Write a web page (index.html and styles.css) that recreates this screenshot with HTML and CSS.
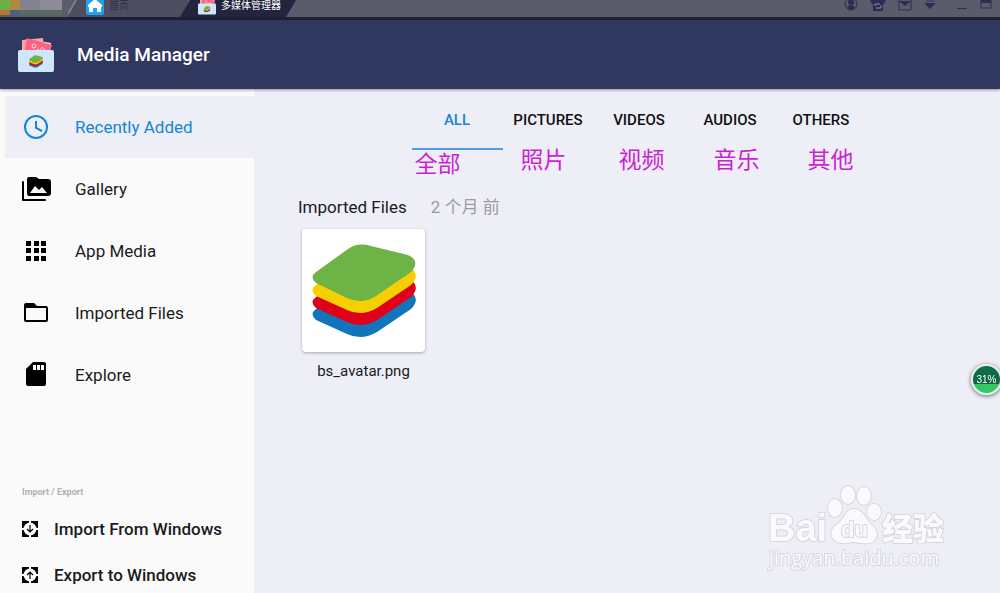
FILE: index.html
```html
<!DOCTYPE html>
<html lang="en">
<head>
    <meta charset="UTF-8">
    <meta name="viewport" content="width=device-width, initial-scale=1.0">
    <title>Media Manager</title>
    <link rel="stylesheet" href="styles.css">
</head>
<body>
    <!-- shared drawings -->
    <svg class="defs" aria-hidden="true">
        <symbol id="stack" viewBox="0 0 104 94">
            <path fill="#1275bb" d="M4 65 L37 41 Q49 32 63 37 L96 46 Q110 54 99 65 L65 88 Q50 97 35 90 L4 76 Q-3 70 4 65Z"/>
            <path fill="#e0001b" d="M4 53 L37 29 Q49 20 63 25 L96 34 Q110 42 99 53 L65 76 Q50 85 35 78 L4 64 Q-3 58 4 53Z"/>
            <path fill="#f6cf00" d="M4 41 L37 17 Q49 8 63 13 L96 22 Q110 30 99 41 L65 64 Q50 73 35 66 L4 52 Q-3 46 4 41Z"/>
            <path fill="#6db346" d="M4 28 L36 5 Q46 -2 59 2 L96 11 Q109 17 99 28 L64 52 Q50 61 35 54 L4 39 Q-3 33 4 28Z"/>
        </symbol>
        <symbol id="media" viewBox="0 0 36 36">
            <path fill="#f4d3e2" d="M4 4 L10 2 L33 6 L31 20 H4Z"/>
            <path fill="#ff9db0" d="M4 3 L25 1 L26 20 H5Z"/>
            <path fill="#f9657f" d="M9 1 L34 8 L30 21 L6 18Z"/>
            <g fill="none" stroke="#ffd5dc">
                <circle cx="16" cy="9" r="2"/>
                <path d="M18 15 L20 12 L22 14 L24 10 L27 13"/>
            </g>
            <path fill="#cfe6fb" d="M2 13 H34 Q36 13 36 15 V33 Q36 35 34 35 H2 Q0 35 0 33 V15 Q0 13 2 13Z"/>
            <use href="#stack" x="11" y="18" width="14" height="13"/>
        </symbol>
    </svg>

    <div class="window-bar">
        <div class="mosaic">
            <span class="m1"></span><span class="m2"></span><span class="m3"></span><span class="m4"></span>
            <span class="m5"></span><span class="m6"></span><span class="m7"></span><span class="m8"></span>
        </div>
        <button class="window-tab home">
            <svg width="18" height="18" viewBox="0 0 18 18">
                <rect width="18" height="18" rx="2" fill="#1ea4ee"/>
                <path fill="#fff" d="M9 2 L16 8 V10 H15 V15 H11 V11 H7 V15 H3 V10 H2 V8Z"/>
            </svg>
            <span>首页</span>
        </button>
        <button class="window-tab active">
            <svg width="18" height="18"><use href="#media"/></svg>
            <span>多媒体管理器</span>
        </button>
        <div class="window-tools">
            <button aria-label="Account">
                <svg width="14" height="14" viewBox="0 0 14 14">
                    <circle cx="7" cy="7" r="6" fill="none" stroke="#2b2e52"/>
                    <circle cx="7" cy="5" r="3" fill="#2b2e52"/>
                    <path fill="#2b2e52" d="M3 11 Q4 8 7 8 T11 11 Q7 14 3 11Z"/>
                </svg>
            </button>
            <button aria-label="Theme">
                <svg width="16" height="14" viewBox="0 0 16 14">
                    <path fill="#2b2e52" d="M0 3 L4 0 H12 L16 3 L14 7 H13 V14 H3 V7 H2Z"/>
                    <path fill="none" stroke="#8d8fa6" d="M5 9 V7 H10 M11 8 V11 H6"/>
                </svg>
            </button>
            <button aria-label="Messages">
                <svg width="14" height="14" viewBox="0 0 14 14">
                    <path fill="none" stroke="#2b2e52" d="M1 1 H13 V13 H1Z"/>
                    <path fill="#2b2e52" d="M1 4 H13 L7 9Z"/>
                </svg>
            </button>
            <button aria-label="Menu">
                <svg width="12" height="12" viewBox="0 0 12 12">
                    <path fill="#44476f" d="M2 2 H10 V5 H2Z"/>
                    <path fill="#2b2e52" d="M0 6 H12 L6 12Z"/>
                </svg>
            </button>
            <button class="minimize" aria-label="Minimize">
                <svg width="12" height="12" viewBox="0 0 12 12"><path fill="#2b2e52" d="M1 11 H11 V12 H1Z"/></svg>
            </button>
            <button aria-label="Maximize">
                <svg width="12" height="12" viewBox="0 0 12 12">
                    <path fill="none" stroke="#2b2e52" d="M1 1 H11 V11 H1Z"/>
                    <path fill="#2b2e52" d="M1 2 H11 V6 H1Z"/>
                </svg>
            </button>
        </div>
    </div>

    <header>
        <svg width="36" height="36"><use href="#media"/></svg>
        <h1>Media Manager</h1>
    </header>

    <div class="layout">
        <aside class="sidebar">
            <nav>
                <a href="#recent" class="nav-item selected">
                    <svg width="32" height="32" viewBox="0 0 32 32">
                        <circle cx="16" cy="16" r="11" fill="none" stroke="#1485d8" stroke-width="2"/>
                        <path fill="none" stroke="#1485d8" stroke-width="2" d="M16 10 V17 L22 20"/>
                    </svg>
                    Recently Added
                </a>
                <a href="#gallery" class="nav-item">
                    <svg width="32" height="32" viewBox="0 0 32 32">
                        <path fill="none" stroke="#000" stroke-width="2" stroke-linejoin="round" stroke-linecap="round" d="M3 9 V27 H25"/>
                        <path d="M9 4 H16 L19 6 H28 Q31 6 31 9 V20 Q31 23 28 23 H9 Q7 23 7 20 V6 Q7 4 9 4Z"/>
                        <path fill="#fafafa" d="M10 20 L15 13 L19 17 L22 14 L27 20Z"/>
                    </svg>
                    Gallery
                </a>
                <a href="#apps" class="nav-item">
                    <svg width="32" height="32" viewBox="0 0 32 32">
                        <path d="M6 6h5v5h-5z M14 6h5v5h-5z M21 6h5v5h-5z M6 13h5v5h-5z M14 13h5v5h-5z M21 13h5v5h-5z M6 21h5v5h-5z M14 21h5v5h-5z M21 21h5v5h-5z"/>
                    </svg>
                    App Media
                </a>
                <a href="#imported" class="nav-item">
                    <svg width="32" height="32" viewBox="0 0 32 32">
                        <path d="M6 6 H14 L17 9 H26 Q28 9 28 11 V23 Q28 25 26 25 H6 Q4 25 4 23 V8 Q4 6 6 6Z"/>
                        <path fill="#fafafa" d="M6 11 H26 V23 H6Z"/>
                    </svg>
                    Imported Files
                </a>
                <a href="#explore" class="nav-item">
                    <svg width="32" height="32" viewBox="0 0 32 32">
                        <path d="M13 3 H24 Q26 3 26 5 V25 Q26 27 24 27 H9 Q6 27 6 25 V10Z"/>
                        <path fill="#fafafa" d="M13 6h3v5h-3z M17 6h3v5h-3z M21 6h3v5h-3z"/>
                    </svg>
                    Explore
                </a>
            </nav>
            <div class="transfer">
                <h2>Import / Export</h2>
                <button>
                    <svg width="16" height="16" viewBox="0 0 16 16">
                        <rect width="16" height="16"/>
                        <circle cx="8" cy="8" r="6.5" fill="#fff"/>
                        <path d="M7 0h2v3h-2z M7 14h2v2h-2z M0 7h2v2h-2z M14 7h2v2h-2z" fill="#fff"/>
                        <path fill="none" stroke="#000" stroke-width="1.2" d="M8 4 V11 M5 8 L8 11 L11 8"/>
                    </svg>
                    Import From Windows
                </button>
                <button>
                    <svg width="16" height="16" viewBox="0 0 16 16">
                        <rect width="16" height="16"/>
                        <circle cx="8" cy="8" r="6.5" fill="#fff"/>
                        <path d="M7 0h2v3h-2z M7 14h2v2h-2z M0 7h2v2h-2z M14 7h2v2h-2z" fill="#fff"/>
                        <path fill="none" stroke="#000" stroke-width="1.2" d="M8 12 V5 M5 8 L8 5 L11 8"/>
                    </svg>
                    Export to Windows
                </button>
            </div>
        </aside>

        <main>
            <div class="tabs">
                <button class="tab current">ALL</button>
                <button class="tab">PICTURES</button>
                <button class="tab">VIDEOS</button>
                <button class="tab">AUDIOS</button>
                <button class="tab">OTHERS</button>
                <!-- translation notes over the tabs -->
                <span class="note note-all">全部</span>
                <span class="note note-pictures">照片</span>
                <span class="note note-videos">视频</span>
                <span class="note note-audios">音乐</span>
                <span class="note note-others">其他</span>
            </div>
            <section>
                <div class="group-title">
                    <h2>Imported Files</h2>
                    <time>2 个月 前</time>
                </div>
                <figure>
                    <div class="thumb">
                        <svg width="104" height="94"><use href="#stack"/></svg>
                    </div>
                    <figcaption>bs_avatar.png</figcaption>
                </figure>
            </section>
        </main>
    </div>

    <div class="badge">31%</div>

    <svg class="watermark" width="184" height="90" viewBox="0 0 184 90">
        <text class="wm-bai" x="3" y="56">Bai</text>
        <g>
            <ellipse cx="70" cy="23" rx="7" ry="9"/>
            <ellipse cx="83" cy="10" rx="7" ry="9"/>
            <ellipse cx="99" cy="11" rx="7" ry="9"/>
            <ellipse cx="109" cy="27" rx="7" ry="8"/>
            <path d="M89 24 Q96 24 100 32 Q104 38 109 42 Q115 50 109 56 Q104 60 89 57 Q74 60 69 55 Q63 48 70 41 Q77 36 80 30 Q83 24 89 24Z"/>
        </g>
        <text class="wm-du" x="76" y="52">du</text>
        <text class="wm-cn" x="117" y="55">经验</text>
        <text class="wm-url" x="4" y="80">jingyan.baidu.com</text>
    </svg>
</body>
</html>
```
FILE: styles.css
```css
* {
    box-sizing: border-box;
}

body {
    margin: 0;
    min-height: 100vh;
    display: flex;
    flex-direction: column;
    font-family: Roboto, "Noto Sans CJK SC", sans-serif;
    color: #1b1b1d;
    background-color: #edeef6;
    overflow-x: hidden;
}

button {
    font-family: inherit;
    background: none;
    border: none;
    margin: 0;
    padding: 0;
    color: inherit;
    cursor: pointer;
}

h1, h2, figure {
    margin: 0;
}

.defs {
    position: absolute;
    width: 0;
    height: 0;
}

/* window bar */
.window-bar {
    display: flex;
    height: 20px;
    background-color: #5b5b6c;
    border-bottom: 3px solid #1f2139;
    overflow: hidden;
}

.mosaic {
    display: grid;
    grid-template-columns: 10px 10px 20px 22px;
    grid-template-rows: 10px 5px;
    width: 68px;
}

.m1 { background-color: #6fae45; }
.m2 { background-color: #b08a3c; }
.m3 { background-color: #83838f; }
.m4 { background-color: #8c8c97; }
.m5 { background-color: #b8752f; }
.m6 { background-color: #4d6186; }
.m7 { background-color: #586c60; }
.m8 { background-color: #5a6a65; }

.window-tab {
    display: flex;
    align-items: center;
    gap: 5px;
    height: 17px;
    padding-bottom: 6px;
    font-size: 10px;
    line-height: 12px;
    white-space: nowrap;
}

.window-tab svg {
    flex: none;
}

.window-tab.home {
    width: 120px;
    padding-left: 18px;
    color: #2e2e44;
    background: linear-gradient(120deg, #5b5b6c 6px, #7b7b8b 6px, #7b7b8b 8px, #4e4e60 8px);
}

.window-tab.active {
    width: 116px;
    padding-left: 18px;
    margin-left: -8px;
    color: #fff;
    background-color: #23253f;
    clip-path: polygon(10px 0, 100% 0, calc(100% - 10px) 100%, 0 100%);
}

.window-tools {
    display: flex;
    align-items: flex-start;
    gap: 12px;
    margin-left: auto;
    padding-right: 8px;
}

.window-tools svg {
    display: block;
    margin-top: -3px;
}

.window-tools .minimize {
    margin-left: 8px;
}

/* header */
header {
    display: flex;
    align-items: center;
    gap: 23px;
    height: 69px;
    padding: 0 18px;
    color: #fff;
    background-color: #31385f;
    box-shadow: 0 1px 3px rgba(0, 0, 0, 0.4);
    z-index: 1;
}

header h1 {
    font-size: 19px;
    font-weight: 500;
}

.layout {
    flex: 1;
    display: flex;
}

/* sidebar */
.sidebar {
    width: 254px;
    flex: none;
    display: flex;
    flex-direction: column;
    justify-content: space-between;
    padding: 7px 0 1px;
    background-color: #fafafa;
}

.nav-item {
    display: flex;
    align-items: center;
    gap: 23px;
    height: 62px;
    margin-left: 5px;
    padding-left: 15px;
    font-size: 17px;
    color: #1b1b1d;
    text-decoration: none;
}

.nav-item.selected {
    color: #1485d8;
    background-color: #edeef6;
}

.transfer {
    display: flex;
    flex-direction: column;
    gap: 12px;
    padding-left: 22px;
}

.transfer h2 {
    font-size: 9px;
    line-height: 16px;
    font-weight: 700;
    color: #b0b0b3;
}

.transfer button {
    display: flex;
    align-items: center;
    gap: 16px;
    height: 34px;
    font-size: 17px;
    font-weight: 500;
}

/* content */
main {
    flex: 1;
    padding: 0 44px;
}

.tabs {
    position: relative;
    display: grid;
    grid-template-columns: repeat(5, 91px);
    width: 455px;
    margin: 0 auto;
    left: 12px;
}

.tab {
    height: 61px;
    padding-top: 3px;
    font-size: 15px;
    font-weight: 500;
    border-bottom: 2px solid transparent;
    color: #111;
}

.tab.current {
    color: #1485d8;
    border-bottom-color: #4d9fe0;
}

/* notes lie over the tab row */
.note {
    position: absolute;
    top: 54px;
    font-family: "Noto Sans CJK SC", sans-serif;
    font-size: 23px;
    line-height: 30px;
    color: #cc1fd6;
}

.note-all { left: 3px; top: 58px; }
.note-pictures { left: 109px; }
.note-videos { left: 207px; }
.note-audios { left: 302px; }
.note-others { left: 396px; }

.group-title {
    display: flex;
    align-items: center;
    gap: 24px;
    margin-top: 45px;
    line-height: 24px;
    font-size: 17px;
}

.group-title h2 {
    font-size: 17px;
    font-weight: 400;
}

.group-title time {
    color: #9b9ba1;
}

figure {
    width: 123px;
    margin: 10px 0 0 4px;
    text-align: center;
}

.thumb {
    display: flex;
    align-items: center;
    justify-content: center;
    height: 123px;
    background-color: #fff;
    border-radius: 4px;
    box-shadow: 0 1px 3px rgba(0, 0, 0, 0.3);
}

figcaption {
    margin-top: 8px;
    font-size: 15px;
    line-height: 22px;
}

/* floating badge */
.badge {
    position: fixed;
    right: -2px;
    top: 364px;
    width: 31px;
    height: 31px;
    border: 2px solid #e4f0ea;
    border-radius: 50%;
    background: linear-gradient(#0f7048, #0c6540 65%, #35c765 65%);
    box-shadow: 0 1px 4px rgba(0, 0, 0, 0.6);
    color: #fff;
    font-family: "Liberation Sans", sans-serif;
    font-size: 10px;
    line-height: 27px;
    text-align: center;
}

/* watermark */
.watermark {
    position: fixed;
    right: 51px;
    bottom: 18px;
    fill: #fafafd;
    stroke: #d6d7df;
    stroke-width: 2px;
    stroke-linejoin: round;
    paint-order: stroke;
    pointer-events: none;
}

.wm-bai {
    font: 700 38px "Liberation Sans", sans-serif;
}

.wm-du {
    font: 700 22px "Liberation Sans", sans-serif;
}

.wm-cn {
    font: 900 31px "Noto Sans CJK SC", sans-serif;
}

.wm-url {
    font: 400 20px "Open Sans", sans-serif;
}
```
